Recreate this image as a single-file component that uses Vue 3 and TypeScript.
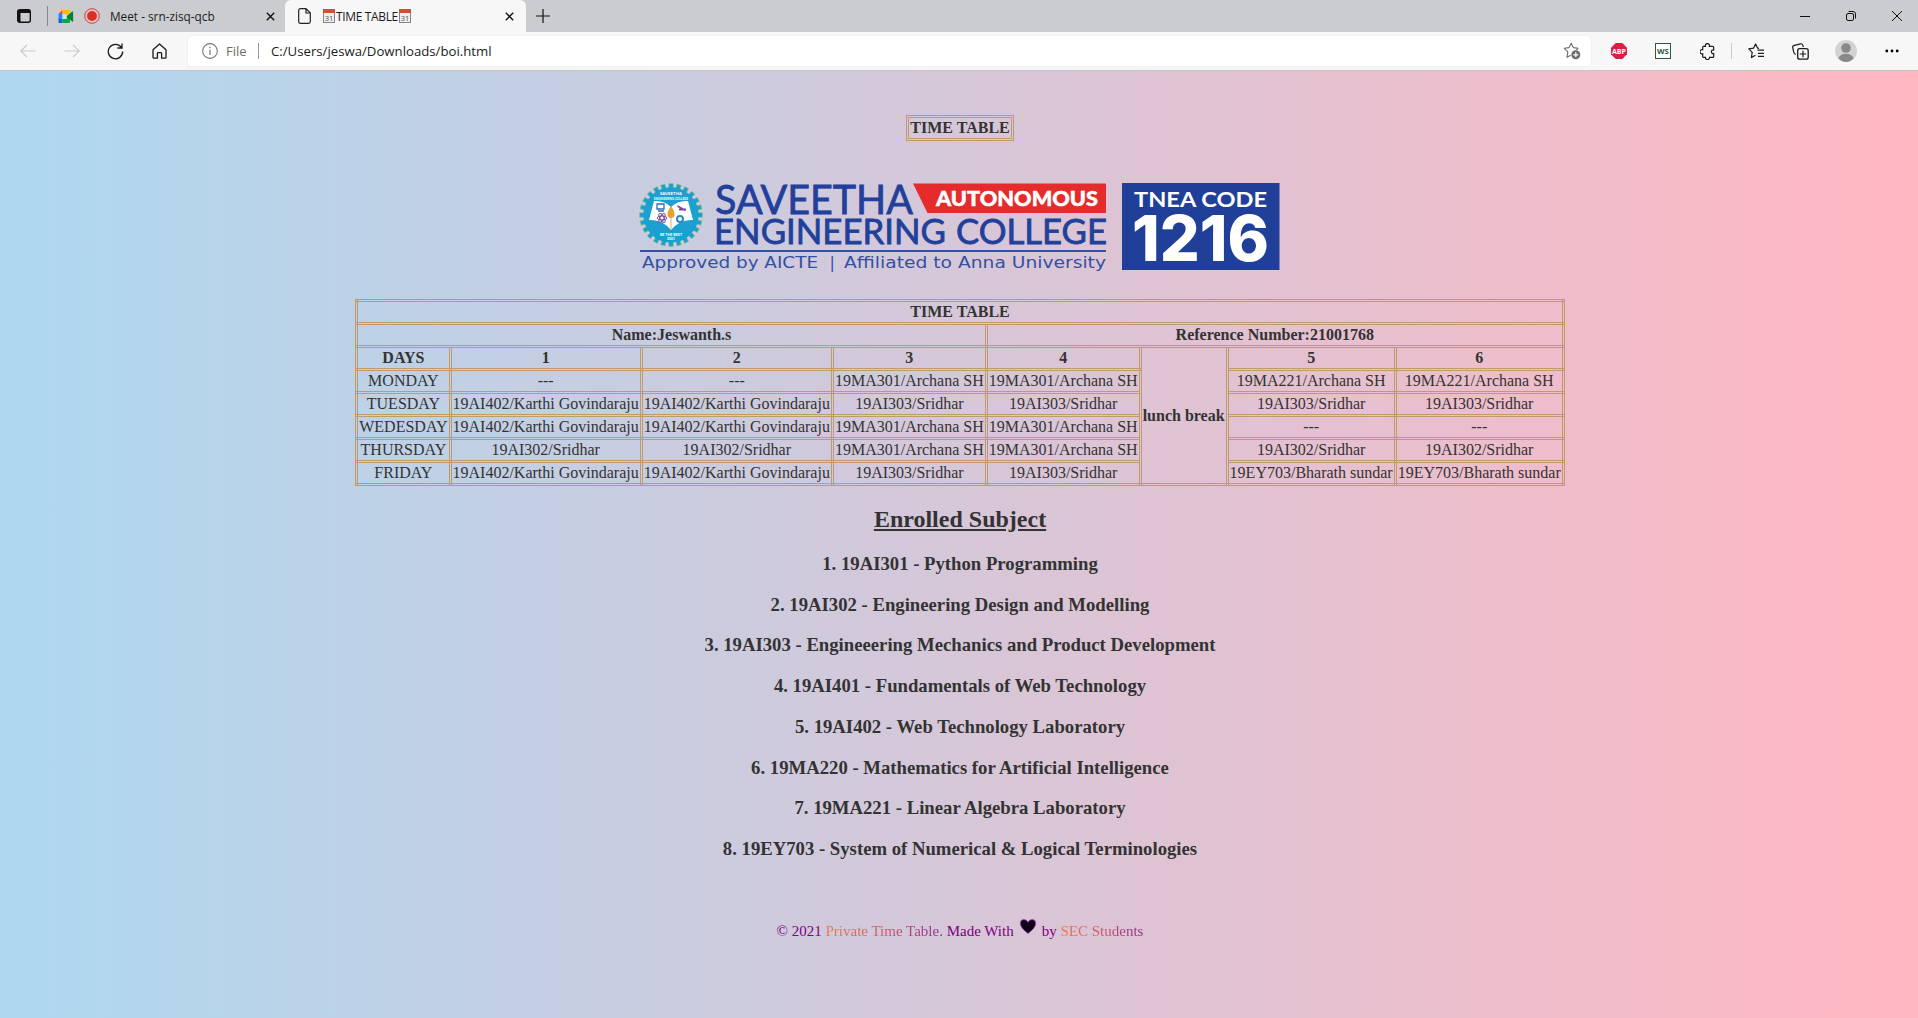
<script setup lang="ts">
interface Row { day: string; cells: string[] }
const K = '19AI402/Karthi Govindaraju'
const A = '19MA301/Archana SH'
const B = '19MA221/Archana SH'
const S2 = '19AI302/Sridhar'
const S3 = '19AI303/Sridhar'
const E = '19EY703/Bharath sundar'
const N = '---'
const rows: Row[] = [
  { day: 'MONDAY', cells: [N, N, A, A, B, B] },
  { day: 'TUESDAY', cells: [K, K, S3, S3, S3, S3] },
  { day: 'WEDESDAY', cells: [K, K, A, A, N, N] },
  { day: 'THURSDAY', cells: [S2, S2, A, A, S2, S2] },
  { day: 'FRIDAY', cells: [K, K, S3, S3, E, E] },
]
const subjects: string[] = [
  '1. 19AI301 - Python Programming',
  '2. 19AI302 - Engineering Design and Modelling',
  '3. 19AI303 - Engineeering Mechanics and Product Development',
  '4. 19AI401 - Fundamentals of Web Technology',
  '5. 19AI402 - Web Technology Laboratory',
  '6. 19MA220 - Mathematics for Artificial Intelligence',
  '7. 19MA221 - Linear Algebra Laboratory',
  '8. 19EY703 - System of Numerical & Logical Terminologies',
]
const teeth: number[] = Array.from({ length: 24 }, (_, i) => i * 15)
</script>

<template>
  <div class="window">
    <header class="tabs">
      <svg class="tabmenu" width="14" height="14" viewBox="0 0 14 14"><rect x=".7" y=".7" width="12.6" height="12.6" rx="2" fill="none" stroke="#111" stroke-width="1.4" /><path d="M1 1h12v3H1zM1 4h2.5v9H1z" fill="#111" /></svg>
      <span class="vline"></span>
      <svg class="meet" width="16" height="13" viewBox="0 0 15 13"><path d="M0 4 4 0v4z" fill="#ea4335" /><path d="M4 0h6.500q1 0 1 1v3.500L8 6.500V4H4z" fill="#fbbc04" /><path d="M0 4h4v5H0z" fill="#2684fc" /><path d="M0 9h4v4H1q-1 0-1-1z" fill="#0066da" /><path d="M4 9h4V6.500l3.500 2V12q0 1-1 1H4z" fill="#00ac47" /><path d="M8 6.500 13.600 1.600q1-.6 1 .4v9q0 1-1 .4z" fill="#00832d" /><path d="M4 4h4v5H4z" fill="#d8dde0" /></svg>
      <svg class="rec" width="16" height="16" viewBox="0 0 16 16"><circle cx="8" cy="8" r="7.300" fill="#e3c6c8" stroke="#d93c36" stroke-width="1" /><circle cx="8" cy="8" r="4.900" fill="#d93025" /></svg>
      <span class="t1">Meet - srn-zisq-qcb</span>
      <svg width="9" height="9" viewBox="0 0 9 9"><path d="M.8.8l7.400 7.400M8.200.8.8 8.200" stroke="#111" stroke-width="1.400" /></svg>
      <div class="active">
        <svg width="13" height="16" viewBox="0 0 13 16"><path d="M2.500.7H8l4.300 4.300v8.500q0 1.800-1.800 1.800h-8Q.7 15.300.7 13.500v-11Q.7.7 2.500.7zM8 .8V5h4.200" fill="none" stroke="#222" stroke-width="1.200" /></svg>
        <span class="t2">
          <svg v-for="n in 2" :key="n" :class="'c' + n" width="12" height="14" viewBox="0 0 12 14"><rect x=".5" y=".5" width="11" height="13" fill="#eee" stroke="#8a8583" /><path d="M0 0h12v4H0z" fill="#d2502f" /><text x="6" y="11.500" text-anchor="middle" font-size="7.500" fill="#555">31</text></svg>
          <b>TIME TABLE</b>
        </span>
        <svg width="9" height="9" viewBox="0 0 9 9"><path d="M.8.8l7.400 7.400M8.200.8.8 8.200" stroke="#111" stroke-width="1.400" /></svg>
      </div>
      <svg class="plus" width="14" height="14" viewBox="0 0 14 14"><path d="M7 0v14M0 7h14" stroke="#111" stroke-width="1.200" /></svg>
      <div class="controls">
        <svg width="10" height="10" viewBox="0 0 10 10"><path d="M0 5.500h10" stroke="#111" /></svg>
        <svg width="10" height="10" viewBox="0 0 10 10" fill="none" stroke="#111"><rect x=".5" y="2.500" width="7" height="7" rx="1.500" /><path d="M2.500.5H7q2.500 0 2.500 2.500v4.500" /></svg>
        <svg width="10" height="10" viewBox="0 0 10 10"><path d="M0 0l10 10M10 0 0 10" stroke="#111" /></svg>
      </div>
    </header>

    <div class="toolbar">
      <svg class="back" width="16" height="14" viewBox="0 0 16 14"><path d="M15.500 7H1M7 .8.800 7 7 13.200" fill="none" stroke="#c9c9c9" stroke-width="1.200" /></svg>
      <svg class="fwd" width="16" height="14" viewBox="0 0 16 14"><path d="M.5 7H15M9 .8 15.200 7 9 13.200" fill="none" stroke="#c9c9c9" stroke-width="1.200" /></svg>
      <svg class="reload" width="17" height="17" viewBox="0 0 17 17"><path d="M14.500 4.600A7.200 7.200 0 1 0 15.700 8.500M15 .5V5h-4.600" fill="none" stroke="#1b1b1b" stroke-width="1.300" /></svg>
      <svg class="home" width="15" height="16" viewBox="0 0 15 16"><path d="M1 6.800 7.500 1 14 6.800V14.300q0 .9-.9.900H9.600V10.500q0-.8-.8-.8H6.200q-.8 0-.8.8v4.700H1.900q-.9 0-.9-.9z" fill="none" stroke="#1b1b1b" stroke-width="1.300" stroke-linejoin="round" /></svg>
      <div class="address">
        <svg width="16" height="16" viewBox="0 0 15 15"><circle cx="7.500" cy="7.500" r="6.900" fill="none" stroke="#767676" /><path d="M7.500 6.300v5M7.500 3.600v1.400" stroke="#767676" stroke-width="1.200" /></svg>
        <span class="file">File</span><span class="sep"></span>
        <span class="url">C:/Users/jeswa/Downloads/boi.html</span>
        <svg class="fav" width="18" height="18" viewBox="0 0 18 18"><path d="M15.200 6.300 10.300 5.600 8.200 1.300 6.100 5.600 1.300 6.300 4.800 9.800 4 15.200 7.600 13.200M15.200 6.300 13.500 8" fill="none" stroke="#6b6b6b" stroke-linejoin="round" stroke-width="1.100" /><circle cx="12.800" cy="12.800" r="4.500" fill="#6b6b6b" /><path d="M12.800 10.300v5M10.300 12.800h5" stroke="#fff" stroke-width="1.200" /></svg>
      </div>
      <div class="exts">
        <svg class="abp" width="16" height="16" viewBox="0 0 16 16"><path d="M4.700 0h6.600L16 4.700v6.600L11.300 16H4.700L0 11.300V4.700z" fill="#dd1e45" /><text x="8" y="10.900" text-anchor="middle" font-size="7.800" font-weight="700" fill="#fff" textLength="14" lengthAdjust="spacingAndGlyphs">ABP</text></svg>
        <svg class="ws" width="16" height="16" viewBox="0 0 16 16"><rect x=".5" y=".5" width="15" height="15" fill="#fff" stroke="#285c3b" /><text x="8" y="10.800" text-anchor="middle" font-size="7.800" font-weight="700" fill="#285c3b">WS</text></svg>
        <svg class="puz" width="15" height="17" viewBox="0 0 15 17"><path d="M3.200 3.300H5.400a2.100 2.100 0 1 1 4 0h3.300q1 0 1 1V6.900a1.900 1.900 0 1 0 0 3.700v2.800q0 1-1 1H9.600a2.100 2.100 0 0 1-4.200 0H3.700q-1 0-1-1v-2.700a2.100 2.100 0 1 1 0-4V4.300q0-1 .5-1z" fill="none" stroke="#1b1b1b" stroke-width="1.200" /></svg>
        <span class="esep"></span>
        <svg width="17" height="16" viewBox="0 0 17 16"><path d="M11 5.400 9.700 5.200 7.600 1 5.500 5.200.8 5.900l3.400 3.400L3.400 14.600 7.500 12.300M9.500 7.200H16M10 10.300h6M10 13.300h6" fill="none" stroke="#1b1b1b" stroke-width="1.200" stroke-linejoin="round" /></svg>
        <svg class="coll" width="17" height="17" viewBox="0 0 17 17"><path d="M3.700 11.500Q2 10.700 1.700 9L.7 4.500Q.4 2.700 2.200 2.300L8.500.8q1.700-.3 2.300 1.300l.5 2" fill="none" stroke="#1b1b1b" stroke-width="1.200" /><rect x="5.700" y="5.700" width="10.500" height="10.500" rx="2" fill="none" stroke="#1b1b1b" stroke-width="1.300" /><path d="M11 7.800v6.400M7.800 11h6.400" stroke="#1b1b1b" stroke-width="1.200" /></svg>
        <svg class="user" width="22" height="22" viewBox="0 0 22 22"><circle cx="11" cy="11" r="11" fill="#d5d3d1" /><circle cx="11" cy="8" r="4.800" fill="#8b8988" /><path d="M3.300 18.300q2-4.500 7.700-4.500t7.700 4.500Q15.500 22 11 22t-7.700-3.700z" fill="#8b8988" /></svg>
        <svg class="dots" width="14" height="4" viewBox="0 0 14 4"><circle cx="1.800" cy="2" r="1.400" /><circle cx="7" cy="2" r="1.400" /><circle cx="12.200" cy="2" r="1.400" /></svg>
      </div>
    </div>

    <main class="page">
      <div class="title">TIME TABLE</div>

      <svg class="logo" width="642" height="92" viewBox="0 0 642 92">
        <rect v-for="t in teeth" :key="t" x="29.800" y="1.500" width="4.400" height="6" fill="#1c9fd1" stroke="#9cc27a" stroke-width=".6" :transform="`rotate(${t} 32 33)`" />
        <circle cx="32" cy="33" r="27.700" fill="#1c9fd1" />
        <path d="M15 19q10-1 17 6 7-7 17-6l5 19q-13-1-22 10-9-11-22-10z" fill="#fff" />
        <path d="M32 25v23" stroke="#d9b36a" stroke-width="1" />
        <path d="M32 24q-3.500 5-3.500 8 0 4 3.500 4t3.500-4q0-3-3.500-8z" fill="#eaa12c" />
        <path d="M18 22h7v5h-7zM19 29h6" fill="none" stroke="#2b6cb5" stroke-width="1.300" />
        <g fill="none" stroke="#7a4ba0" stroke-width="1"><ellipse cx="23" cy="36" rx="5" ry="2" /><ellipse cx="23" cy="36" rx="5" ry="2" transform="rotate(60 23 36)" /><ellipse cx="23" cy="36" rx="5" ry="2" transform="rotate(120 23 36)" /></g>
        <path d="M38.500 24l8 4.500M40 27.500h7" stroke="#7a4ba0" stroke-width="1.800" /><circle cx="41" cy="37" r="3" fill="none" stroke="#2f86b8" stroke-width="2" />
        <g fill="#fff" font-weight="700" text-anchor="middle"><text x="32" y="12.800" font-size="4.500" textLength="22" lengthAdjust="spacingAndGlyphs">SAVEETHA</text><text x="32" y="17.600" font-size="2.900" textLength="34" lengthAdjust="spacingAndGlyphs">ENGINEERING COLLEGE</text><text x="32" y="53.500" font-size="3.700">BE THE BEST</text><text x="32" y="58" font-size="3.500">2001</text></g>
        <g fill="#22409a" stroke="#22409a" stroke-width=".8">
          <text x="76" y="32.300" font-size="41.500" textLength="198" lengthAdjust="spacingAndGlyphs">SAVEETHA</text>
          <text x="75" y="62.300" font-size="34" textLength="232" lengthAdjust="spacingAndGlyphs">ENGINEERING</text>
          <text x="317" y="62.300" font-size="34" textLength="151" lengthAdjust="spacingAndGlyphs">COLLEGE</text>
        </g>
        <path d="M274 1.500H467V31H288.500z" fill="#e52b2b" />
        <text x="297" y="23.700" font-size="21.500" font-weight="900" fill="#fff" stroke="#fff" stroke-width=".5" textLength="162" lengthAdjust="spacingAndGlyphs">AUTONOMOUS</text>
        <path d="M1 69H467" stroke="#3450a2" stroke-width="2" />
        <g class="sub" font-size="16" fill="#3450a2">
          <text x="3" y="86.300" textLength="176" lengthAdjust="spacingAndGlyphs">Approved by AICTE</text>
          <text x="190.500" y="86.300">|</text>
          <text x="205" y="86.300" textLength="262" lengthAdjust="spacingAndGlyphs">Affiliated to Anna University</text>
        </g>
        <rect x="483" y="1" width="157.500" height="87" fill="#203f98" />
        <text x="495" y="25.300" font-size="21.500" font-weight="700" fill="#fff" textLength="133" lengthAdjust="spacingAndGlyphs">TNEA CODE</text>
        <text class="code" x="493" y="79" font-size="63" font-weight="800" fill="#fff" textLength="137" lengthAdjust="spacingAndGlyphs">1216</text>
      </svg>

      <table>
        <tbody>
          <tr><th colspan="8">TIME TABLE</th></tr>
          <tr><th colspan="4">Name:Jeswanth.s</th><th colspan="4">Reference Number:21001768</th></tr>
          <tr><th>DAYS</th><th>1</th><th>2</th><th>3</th><th>4</th><th rowspan="6">lunch break</th><th>5</th><th>6</th></tr>
          <tr v-for="r in rows" :key="r.day"><td>{{ r.day }}</td><td v-for="(c, i) in r.cells" :key="i">{{ c }}</td></tr>
        </tbody>
      </table>

      <h2>Enrolled Subject</h2>
      <h3 v-for="s in subjects" :key="s">{{ s }}</h3>

      <footer>
        <span>© 2021 <span class="g1">Private Time Table.</span> Made With</span>
        <svg width="18" height="17" viewBox="0 0 18 17"><path d="M9 15.500Q1.300 10 1.300 5.300 1.300 1.500 4.900 1.500 7.800 1.500 9 4.200 10.200 1.500 13.100 1.500 16.700 1.500 16.700 5.300 16.700 10 9 15.500z" fill="#0d0018" stroke="#b23cba" stroke-width=".8" /></svg>
        <span>by <span class="g2">SEC Students</span></span>
      </footer>
    </main>
  </div>
</template>

<style>
body { margin: 0; overflow: hidden; }
</style>

<style scoped>
.window { width: 1918px; height: 1018px; overflow: hidden; display: flex; flex-direction: column; font-family: "Open Sans", "Noto Sans", sans-serif; }
svg { display: block; flex: none; }
.tabs { height: 32px; flex: none; background: #caccd0; display: flex; align-items: center; font-size: 11.8px; color: #1b1b1b; }
.tabmenu { margin-left: 17px; }
.vline { width: 1px; height: 20px; background: #85878a; margin: 0 10px 0 16px; }
.rec { margin-left: 10px; }
.t1 { margin-left: 10px; width: 156px; white-space: nowrap; }
.active { width: 241px; height: 32px; margin-left: 10px; background: #f7f7f7; border-radius: 6px 6px 0 0; display: flex; align-items: center; box-sizing: border-box; padding-left: 13px; }
.t2 { display: flex; align-items: center; margin-left: 12px; width: 182px; }
.t2 b { font-weight: 400; order: 1; font-size: 12px; letter-spacing: -.35px; margin: 0 1px; }
.c2 { order: 2; }
.plus { margin-left: 10px; }
.controls { display: flex; gap: 36px; margin-left: auto; margin-right: 16px; }
.toolbar { height: 39px; flex: none; background: #f7f7f7; display: flex; align-items: center; border-bottom: 1px solid #c6c6c6; box-sizing: border-box; font-size: 13px; }
.back { margin-left: 20px; }
.fwd { margin-left: 28px; }
.reload { margin-left: 27px; }
.home { margin-left: 28px; }
.address { margin-left: 21px; width: 1403px; height: 30px; background: #fff; border-radius: 4px; display: flex; align-items: center; box-sizing: border-box; padding-left: 14px; box-shadow: 0 0 2px #e3e3e3; }
.file { margin-left: 8px; width: 22px; color: #6e6e6e; }
.sep { width: 1px; height: 16px; background: #999; margin: 0 12px 0 10px; }
.url { color: #1b1b1b; font-size: 13.2px; }
.fav { margin-left: auto; margin-right: 10px; }
.exts { display: flex; align-items: center; }
.abp { margin-left: 20px; }
.ws { margin-left: 28px; }
.puz { margin-left: 29px; }
.esep { width: 1px; height: 16px; background: #c8c8c8; margin: 0 16px; }
.coll { margin-left: 27px; }
.user { margin-left: 26px; }
.dots { margin-left: 28px; }
.page { flex: 1; display: flex; flex-direction: column; align-items: center; padding-left: 2px; background: linear-gradient(to right, #add8f0, #ffb6c1); color: #333; font-family: "Liberation Serif", serif; font-size: 16px; }
.title { margin-top: 44px; border: 3px double #c09a6b; padding: 1px; font-weight: 700; line-height: 18px; }
.logo { margin: 41px 0 25px; }
.logo text { font-family: Lato, sans-serif; }
.logo .code { font-family: Inter, sans-serif; }
.logo .sub text { font-family: "DejaVu Sans", sans-serif; }
table { border-collapse: collapse; border: 3px double #c09a6b; text-align: center; }
td, th { border: 3px double #c09a6b; padding: 1px; line-height: 18px; white-space: nowrap; }
h2 { margin: 20px 0; font-size: 24px; line-height: 27px; text-decoration: underline; }
h3 { margin: 0 0 19.720px; font-size: 18.720px; line-height: 21px; }
footer { display: flex; margin-top: 43px; color: #800080; font-size: 15px; line-height: 18px; gap: 5px; }
footer svg { margin-top: -4px; }
.g1, .g2 { color: transparent; background: linear-gradient(to right, #ef7a44, #cf5670 50%, #8f2c8c); background-clip: text; -webkit-background-clip: text; }
</style>
